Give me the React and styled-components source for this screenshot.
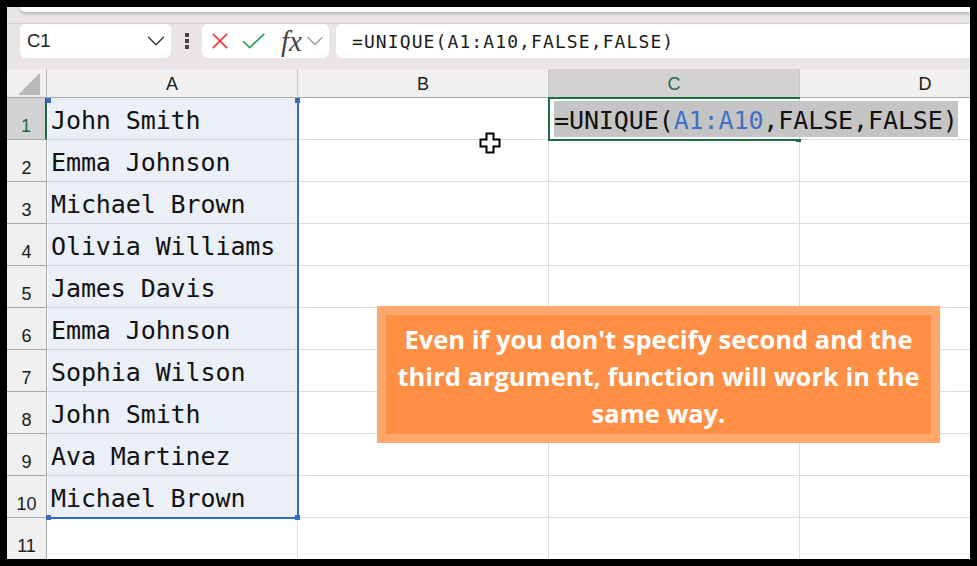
import React from 'react';
import styled, { createGlobalStyle } from 'styled-components';
import { ChevronDown } from 'lucide-react';

const names = [
  'John Smith',
  'Emma Johnson',
  'Michael Brown',
  'Olivia Williams',
  'James Davis',
  'Emma Johnson',
  'Sophia Wilson',
  'John Smith',
  'Ava Martinez',
  'Michael Brown',
];

const columns = ['A', 'B', 'C', 'D'];
const rows = Array.from({ length: 11 }, (_, i) => i + 1);

const App = () => (
  <Frame>
    <GlobalStyle />
    <Screen>
      <Ribbon>
        <RibbonSheet />
      </Ribbon>
      <FormulaBar>
        <NameBox>
          <span>C1</span>
          <ChevronDown size={30} strokeWidth={1.1} color="#333" />
        </NameBox>
        <Grip>
          <i />
          <i />
          <i />
        </Grip>
        <ActionBox>
          <svg width="20" height="20" viewBox="0 0 20 20">
            <path d="M2 2 L18 18 M18 2 L2 18" fill="none" stroke="#ee3b3b" strokeWidth="1.9" />
          </svg>
          <CheckIcon width="26" height="18" viewBox="0 0 26 18">
            <path d="M1 9 L8.5 16.5 L25 1" fill="none" stroke="#2f9e54" strokeWidth="1.9" />
          </CheckIcon>
          <FxLabel>fx</FxLabel>
          <FxChevron>
            <ChevronDown size={28} strokeWidth={1.1} color="#9a9a9a" />
          </FxChevron>
        </ActionBox>
        <FormulaInput>=UNIQUE(A1:A10,FALSE,FALSE)</FormulaInput>
      </FormulaBar>
      <Sheet>
        <ColumnHeaders>
          <Corner>
            <svg width="26" height="26" viewBox="0 0 26 26">
              <path d="M1 25 L23 3 V25 Z" fill="#b9b9b9" />
            </svg>
          </Corner>
          {columns.map((c) => (
            <ColumnHeader key={c} $active={c === 'C'}>
              {c}
            </ColumnHeader>
          ))}
        </ColumnHeaders>
        {rows.map((r) => (
          <Row key={r}>
            <RowHeader $active={r === 1}>{r}</RowHeader>
            <Cell $selected={r <= 10}>{names[r - 1]}</Cell>
            <Cell />
            <Cell>
              {r === 1 && (
                <FormulaText>
                  =UNIQUE(<RefText>A1:A10</RefText>,FALSE,FALSE)
                </FormulaText>
              )}
            </Cell>
            <Cell />
          </Row>
        ))}
        <RangeOutline>
          <RangeHandle $side="left" $edge="top" />
          <RangeHandle $side="right" $edge="top" />
          <RangeHandle $side="left" $edge="bottom" />
          <RangeHandle $side="right" $edge="bottom" />
        </RangeOutline>
        <ActiveCell>
          <ActiveHandle />
        </ActiveCell>
        <Cursor width="24" height="24" viewBox="0 0 24 24">
          <path
            d="M8.5 2.5 H15.5 V8.5 H21.5 V15.5 H15.5 V21.5 H8.5 V15.5 H2.5 V8.5 H8.5 Z"
            fill="#fff"
            stroke="#000"
            strokeWidth="2"
          />
        </Cursor>
        <Callout>
          <CalloutInner>
            Even if you don't specify second and the third argument, function will work in the same way.
          </CalloutInner>
        </Callout>
      </Sheet>
    </Screen>
  </Frame>
);

const GlobalStyle = createGlobalStyle`
  html, body {
    margin: 0;
    padding: 0;
    background: #000;
  }
`;

const Frame = styled.div`
  width: 977px;
  height: 566px;
  padding: 7px;
  box-sizing: border-box;
  background: #000;
`;

const Screen = styled.div`
  width: 963px;
  height: 552px;
  overflow: hidden;
  background: #fff;
  display: flex;
  flex-direction: column;
  font-family: 'Liberation Sans', Arial, sans-serif;
`;

const Ribbon = styled.div`
  height: 17px;
  flex: none;
  box-sizing: border-box;
  padding-left: 13px;
  background: #e9e5e5;
  border-bottom: 1px solid #d4d1d1;
`;

const RibbonSheet = styled.div`
  height: 5px;
  background: #fff;
  border-bottom-left-radius: 6px;
  box-shadow: 0 1px 4px rgba(0, 0, 0, 0.3);
`;

const FormulaBar = styled.div`
  height: 45px;
  flex: none;
  box-sizing: border-box;
  padding: 0 0 11px 13px;
  display: flex;
  align-items: stretch;
  background: #e9e5e5;
`;

const WhiteBox = styled.div`
  background: #fff;
  border-radius: 6px;
  display: flex;
  align-items: center;
  box-sizing: border-box;
`;

const NameBox = styled(WhiteBox)`
  width: 151px;
  padding: 0 0 0 7px;
  justify-content: space-between;
  font-size: 18.5px;
  color: #222;
`;

const Grip = styled.div`
  width: 31px;
  display: flex;
  flex-direction: column;
  align-items: center;
  justify-content: center;
  gap: 2px;

  i {
    display: block;
    width: 4px;
    height: 4px;
    background: #444;
  }
`;

const ActionBox = styled(WhiteBox)`
  width: 127px;
  padding-left: 9px;
`;

const CheckIcon = styled.svg`
  margin-left: 13px;
`;

const FxLabel = styled.span`
  font-family: 'Liberation Serif', serif;
  font-style: italic;
  font-size: 29px;
  line-height: 30px;
  color: #444;
  margin-left: 16px;
`;

const FxChevron = styled.span`
  display: flex;
  margin-left: -1px;
`;

const FormulaInput = styled(WhiteBox)`
  flex: 1;
  margin-left: 7px;
  padding-left: 16px;
  border-radius: 6px 0 0 6px;
  font-family: 'DejaVu Sans Mono', monospace;
  font-size: 18px;
  letter-spacing: 1.1px;
  color: #1a1a1a;
`;

const Sheet = styled.div`
  position: relative;
  flex: 1;
  background: #fff;
`;

const ColumnHeaders = styled.div`
  height: 29px;
  display: grid;
  grid-template-columns: 40px repeat(4, 251px);
  background: #f0f0f0;
  border-bottom: 1px solid #a8a8a8;
  box-sizing: border-box;
`;

const Corner = styled.div`
  border-right: 1px solid #b8b8b8;
  display: flex;
  align-items: flex-end;
  justify-content: flex-end;
  padding: 0 3px 1px 0;
`;

const ColumnHeader = styled.div`
  display: flex;
  align-items: center;
  justify-content: center;
  padding-top: 3px;
  box-sizing: border-box;
  font-size: 18px;
  border-right: 1px solid #c6c6c6;
  background: ${(p) => (p.$active ? '#d2d2d2' : 'transparent')};
  color: ${(p) => (p.$active ? '#1e6c41' : '#1a1a1a')};
`;

const Row = styled.div`
  height: 42px;
  display: grid;
  grid-template-columns: 40px repeat(4, 251px);
`;

const RowHeader = styled.div`
  box-sizing: border-box;
  display: flex;
  align-items: flex-end;
  justify-content: center;
  padding-bottom: 2px;
  font-size: 18px;
  background: ${(p) => (p.$active ? '#d2d2d2' : '#f0f0f0')};
  color: ${(p) => (p.$active ? '#1e6c41' : '#1a1a1a')};
  border-right: ${(p) => (p.$active ? '2px solid #1e6c41' : '1px solid #a8a8a8')};
  border-bottom: 1px solid #a8a8a8;
`;

const Cell = styled.div`
  box-sizing: border-box;
  display: flex;
  align-items: center;
  padding: 3px 0 0 ${(p) => (p.$selected ? '3px' : '4px')};
  white-space: nowrap;
  font-family: 'DejaVu Sans Mono', monospace;
  font-size: 25px;
  letter-spacing: -0.1px;
  color: #111;
  background: ${(p) => (p.$selected ? '#ebeff8' : '#fff')};
  ${(p) => p.$selected && 'border-left: 1px solid #fff;'}
  border-right: 1px solid #dcdcdc;
  border-bottom: 1px solid ${(p) => (p.$selected ? '#cfd2d8' : '#dcdcdc')};
`;

const FormulaText = styled.span`
  position: relative;
  z-index: 1;
  display: block;
  align-self: flex-start;
  box-sizing: border-box;
  height: 36px;
  padding-top: 3px;
  line-height: 33px;
  background: #c4c4c4;
  margin-left: 1px;
`;

const RefText = styled.span`
  color: #3f72c4;
`;

const RangeOutline = styled.div`
  position: absolute;
  left: 40px;
  top: 29px;
  width: 252px;
  height: 421px;
  box-sizing: border-box;
  border: 2px solid #3569c2;
  border-top: none;
  border-left: none;
  border-bottom-width: 2px;
`;

const RangeHandle = styled.i`
  position: absolute;
  width: 5px;
  height: 5px;
  background: #3569c2;
  ${(p) => (p.$side === 'left' ? 'left: -1px;' : 'right: -3px;')}
  ${(p) => (p.$edge === 'top' ? 'top: 0;' : 'bottom: -3px;')}
`;

const ActiveCell = styled.div`
  position: absolute;
  left: 541px;
  top: 28px;
  width: 252px;
  height: 44px;
  box-sizing: border-box;
  border: 2px solid #1e6c41;
  border-right: none;
  z-index: 2;
`;

const ActiveHandle = styled.i`
  position: absolute;
  right: -1px;
  bottom: -3px;
  width: 5px;
  height: 3px;
  background: #1e6c41;
`;

const Cursor = styled.svg`
  position: absolute;
  left: 471px;
  top: 62px;
  z-index: 3;
`;

const Callout = styled.div`
  position: absolute;
  left: 370px;
  top: 237px;
  width: 563px;
  height: 137px;
  box-sizing: border-box;
  padding: 9px;
  background: #ffa76d;
  z-index: 3;
`;

const CalloutInner = styled.div`
  height: 100%;
  box-sizing: border-box;
  padding: 4px 4px 0;
  display: flex;
  align-items: center;
  justify-content: center;
  text-align: center;
  background: #ff8f45;
  color: #fff;
  font-family: 'Open Sans', 'Noto Sans', sans-serif;
  font-weight: 700;
  font-size: 25.5px;
  line-height: 37px;
`;

export default App;
